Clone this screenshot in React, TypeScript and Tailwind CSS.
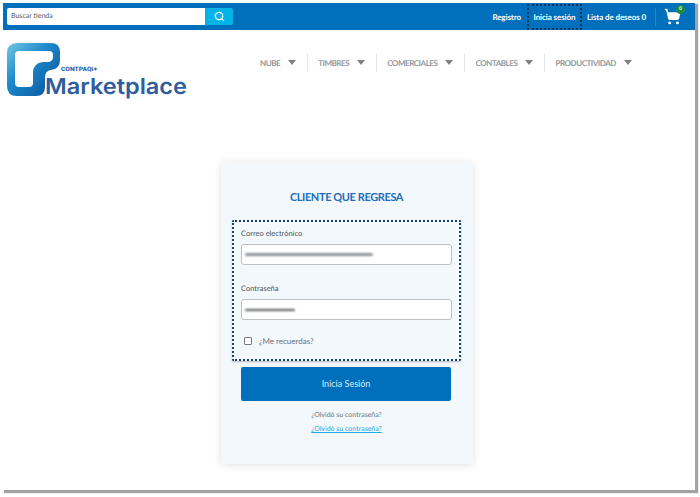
import { Search, ShoppingCart } from "lucide-react";

const NAV_ITEMS = ["NUBE", "TIMBRES", "COMERCIALES", "CONTABLES", "PRODUCTIVIDAD"];

function Logo() {
  return (
    <svg width="190" height="62" viewBox="0 0 190 62" className="shrink-0">
      <defs>
        <linearGradient id="logoBlue" x1="0" y1="0" x2="1" y2="1">
          <stop offset="0" stopColor="#74c8e4" />
          <stop offset="0.4" stopColor="#1d8acb" />
          <stop offset="0.8" stopColor="#0f62a8" />
          <stop offset="1" stopColor="#0d4a85" />
        </linearGradient>
      </defs>
      <path
        d="M10 2H44Q53 2 53 11V19Q53 28 44 29Q38 30 38 36V46Q38 55 29 55H10Q0 55 0 45V12Q0 2 10 2ZM12 10Q8 10 8 14V42Q8 46 12 46H22Q26 46 26 42V32Q26 22 36 21H42Q46 20 46 16V14Q46 10 42 10Z"
        fill="url(#logoBlue)"
        fillRule="evenodd"
      />
      <text x="54" y="30" fontFamily="Roboto, sans-serif" fontSize="6" fontWeight="800" fill="#1d5ca8" textLength="36" lengthAdjust="spacingAndGlyphs">
        CONTPAQi+
      </text>
      <text x="38" y="53" fontFamily="Inter, sans-serif" fontSize="22" fontWeight="600" fill="#2f5d9e" textLength="142" lengthAdjust="spacingAndGlyphs">
        Marketplace
      </text>
    </svg>
  );
}

function NavItem({ label, last }: { label: string; last: boolean }) {
  return (
    <div className={`flex items-center h-[19px] ${last ? "" : "border-r border-[#e4e6e8] pr-[11px]"}`}>
      <span className="text-[8px] font-bold tracking-[-0.45px] text-[#92979c] whitespace-nowrap">{label}</span>
      <svg width="8" height="5" viewBox="0 0 8 5" className="ml-[8px]">
        <path d="M0 0H8L4 5Z" fill="#7d8287" />
      </svg>
    </div>
  );
}

function Field({ label, blurClass }: { label: string; blurClass: string }) {
  return (
    <div>
      <p className="text-[7.5px] leading-[10px] text-[#4a4f55]">{label}</p>
      <div className="mt-[5px] h-[21px] flex items-center px-[3px] bg-white border border-[#bcc1c6] rounded-[3px]">
        <div className={blurClass} />
      </div>
    </div>
  );
}

export default function App() {
  return (
    <div className="w-[700px] h-[497px] overflow-hidden bg-white pl-[3px] pt-[3px] font-['Lato',sans-serif] [text-rendering:geometricPrecision]">
      <div className="w-[692px] h-[487px] bg-white shadow-[2px_2px_1px_1px_#a3a3a3] flex flex-col">
        {/* Top bar */}
        <header className="h-[27px] bg-[#0070bc] flex items-center pl-[4px] pr-[14px] shrink-0">
          <div className="flex w-[226px] h-[17px]">
            <div className="flex-1 bg-white rounded-l-[2px] flex items-center pl-[4px] text-[7px] text-[#555a60]">Buscar tienda</div>
            <div className="w-[28px] bg-[#00b3e8] rounded-r-[2px] flex items-center justify-center">
              <Search size={11} color="white" strokeWidth={3} />
            </div>
          </div>
          <div className="ml-auto flex items-center text-[8px] font-bold tracking-[-0.1px] text-white">
            <span>Registro</span>
            <div className="ml-[6px] h-[26px] w-[55px] flex items-center justify-center border-2 border-dotted border-[#0d3560]">
              Inicia sesión
            </div>
            <span className="ml-[5px]">Lista de deseos 0</span>
            <div className="ml-[9px] h-[18px] border-l border-[#2a86c6]" />
            <div className="ml-[8px] relative">
              <ShoppingCart size={17} color="white" fill="white" />
              <span className="absolute -top-[3px] -right-[4px] w-[9px] h-[9px] rounded-full bg-[#1c8a3f] flex items-center justify-center text-[5px] text-white">0</span>
            </div>
          </div>
        </header>

        {/* Logo and nav */}
        <div className="flex items-start pl-[4px] pt-[11px]">
          <Logo />
          <nav className="ml-[63px] mt-[12px] flex items-center gap-[10px]">
            {NAV_ITEMS.map((item, i) => (
              <NavItem key={item} label={item} last={i === NAV_ITEMS.length - 1} />
            ))}
          </nav>
        </div>

        {/* Login card */}
        <main className="flex justify-center pt-[59px] pr-[4px]">
          <div className="w-[252px] h-[302px] bg-[#f3f8fd] shadow-[0_1px_8px_rgba(0,0,0,0.12)] pl-[11px] pr-[12px] flex flex-col">
            <h2 className="mt-[29px] text-center text-[11px] leading-[14px] font-bold tracking-[-0.4px] text-[#1f6dbb]">CLIENTE QUE REGRESA</h2>
            <div className="mt-[15px] h-[141px] border-2 border-dotted border-[#123f70] rounded-[2px] shadow-[0_1px_2px_rgba(0,0,0,0.25)] px-[7px] pt-[7px]">
              <Field label="Correo electrónico" blurClass="w-[128px] h-[3px] bg-[#8e9296] rounded-full blur-[1px]" />
              <div className="mt-[19px]">
                <Field label="Contraseña" blurClass="w-[50px] h-[2px] bg-[#55575b] rounded-full blur-[1px]" />
              </div>
              <label className="mt-[15px] ml-[3px] flex items-center gap-[7px] text-[8px] text-[#6b7076]">
                <span className="w-[8px] h-[8px] bg-white border border-[#777b80] rounded-[1px]" />
                ¿Me recuerdas?
              </label>
            </div>
            <button className="mt-[6px] ml-[9px] mr-[10px] h-[34px] bg-[#0070bc] rounded-[2px] text-[9px] text-[#d8ecf8]">Inicia Sesión</button>
            <p className="mt-[9px] text-center text-[7px] leading-[10px] text-[#70757a]">¿Olvidó su contraseña?</p>
            <a className="mt-[4px] text-center text-[7px] leading-[10px] text-[#1fa7e8] underline">¿Olvidó su contraseña?</a>
          </div>
        </main>
      </div>
    </div>
  );
}
